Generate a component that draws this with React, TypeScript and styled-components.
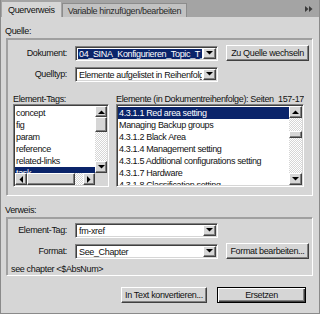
import styled, { createGlobalStyle, css } from "styled-components";

/* -------- Global -------- */
const GlobalStyle = createGlobalStyle`
  html, body {
    margin: 0;
    padding: 0;
    background: #d6d6d6;
  }
  body {
    font-family: "Liberation Sans Narrow", "Arial Narrow", "Liberation Sans", Arial, sans-serif;
    font-size: 9px;
    letter-spacing: -0.35px;
    color: #111;
  }
`;

const raised = css`
  border: 1px solid;
  border-color: #ffffff #404040 #404040 #ffffff;
  box-shadow: inset -1px -1px #808080;
  background: #d6d6d6;
`;

const sunken = css`
  border: 1px solid;
  border-color: #808080 #ffffff #ffffff #808080;
  box-shadow: inset 1px 1px #404040, inset -1px -1px #d6d6d6;
`;

const checker = css`
  background: repeating-conic-gradient(#ffffff 0 25%, #d6d6d6 0 50%) 0 0 / 2px 2px;
`;

/* -------- Styled Components -------- */
const Panel = styled.div`
  width: 320px;
  height: 314px;
  box-sizing: border-box;
  background: #d6d6d6;
  border-left: 1px solid #8a8a8a;
  border-right: 1px solid #8a8a8a;
  border-bottom: 1px solid #8a8a8a;
  display: flex;
  flex-direction: column;
  overflow: hidden;
`;

const TabBar = styled.div`
  height: 17px;
  flex: none;
  background: #a4a4a4;
  display: flex;
  align-items: flex-end;
  padding-left: 1px;
`;

const Tab = styled.div<{ $active?: boolean }>`
  box-sizing: border-box;
  height: ${(p) => (p.$active ? "15px" : "14px")};
  padding: 0 5px;
  display: flex;
  align-items: center;
  margin-right: 1px;
  background: ${(p) => (p.$active ? "#d6d6d6" : "#c2c2c2")};
  color: ${(p) => (p.$active ? "#111" : "#2a2a2a")};
  border: 1px solid ${(p) => (p.$active ? "#d6d6d6" : "#8c8c8c")};
  border-bottom: none;
  white-space: nowrap;
`;

const TabSpacer = styled.div`
  flex: 1;
`;

const MenuIcon = styled.div`
  align-self: center;
  width: 14px;
  display: flex;
  align-items: center;
`;

const Body = styled.div`
  flex: 1;
  display: flex;
  flex-direction: column;
  padding: 9px 6px 0 4px;
`;

const SectionLabel = styled.div<{ $mt?: number }>`
  height: 11px;
  line-height: 11px;
  margin-top: ${(p) => p.$mt ?? 0}px;
  margin-bottom: 1px;
`;

const Group = styled.div<{ $pad: string }>`
  margin-left: 1px;
  border: 1px solid;
  border-color: #a0a0a0 #ffffff #ffffff #a0a0a0;
  box-shadow: 1px 1px 0 #a0a0a0 inset;
  padding: ${(p) => p.$pad};
  display: flex;
  flex-direction: column;
`;

const FormRow = styled.div<{ $mt?: number }>`
  display: grid;
  grid-template-columns: 60px 143px auto;
  column-gap: 8px;
  align-items: center;
  height: 16px;
  margin-top: ${(p) => p.$mt ?? 0}px;
`;

const FieldLabel = styled.div`
  text-align: right;
  white-space: nowrap;
`;

const Select = styled.div`
  ${sunken};
  box-sizing: border-box;
  height: 15px;
  background: #fff;
  display: flex;
  align-items: stretch;
  padding: 1px;
`;

const SelectValue = styled.div<{ $selected?: boolean }>`
  flex: 1;
  overflow: hidden;
  white-space: nowrap;
  line-height: 11px;
  padding-left: 1px;
  margin: 1px 1px 0 1px;
  background: ${(p) => (p.$selected ? "#0a246a" : "transparent")};
  color: ${(p) => (p.$selected ? "#fff" : "#111")};
`;

const ArrowButton = styled.div`
  ${raised};
  box-sizing: border-box;
  width: 13px;
  display: flex;
  align-items: center;
  justify-content: center;
`;

const PushButton = styled.div<{ $width: number; $default?: boolean }>`
  ${raised};
  box-sizing: border-box;
  width: ${(p) => p.$width}px;
  height: 16px;
  display: flex;
  align-items: center;
  justify-content: center;
  white-space: nowrap;
  ${(p) =>
    p.$default &&
    css`
      border-color: #000;
      box-shadow: inset 1px 1px #ffffff, inset -1px -1px #404040,
        inset -2px -2px #808080;
    `}
`;

const ListsArea = styled.div`
  display: grid;
  grid-template-columns: 96px 188px;
  column-gap: 7px;
  margin-top: 12px;
  padding-left: 6px;
`;

const ListHeader = styled.div`
  height: 10px;
  line-height: 10px;
  white-space: nowrap;
  overflow: hidden;
`;

const ListBox = styled.div<{ $hscroll?: boolean; $sbw: number }>`
  ${sunken};
  box-sizing: border-box;
  height: 83px;
  background: #fff;
  padding: 1px;
  display: grid;
  grid-template-columns: 1fr ${(p) => p.$sbw}px;
  grid-template-rows: ${(p) => (p.$hscroll ? "1fr 12px" : "1fr")};
  overflow: hidden;
`;

const ListItems = styled.div`
  overflow: hidden;
  padding-top: 1px;
`;

const ListItem = styled.div<{ $selected?: boolean }>`
  height: 12px;
  line-height: 12px;
  white-space: nowrap;
  padding-left: 1px;
  background: ${(p) => (p.$selected ? "#0a246a" : "transparent")};
  color: ${(p) => (p.$selected ? "#fff" : "#111")};
`;

const VScroll = styled.div`
  display: flex;
  flex-direction: column;
  ${checker};
`;

const HScroll = styled.div`
  display: flex;
  ${checker};
`;

const ScrollBtn = styled.div<{ $size?: number }>`
  ${raised};
  box-sizing: border-box;
  flex: none;
  width: 100%;
  height: ${(p) => p.$size ?? 12}px;
  display: flex;
  align-items: center;
  justify-content: center;
`;

const HScrollBtn = styled(ScrollBtn)`
  width: 12px;
  height: 100%;
`;

const Thumb = styled.div<{ $size: number; $offset?: number }>`
  ${raised};
  box-sizing: border-box;
  flex: none;
  height: ${(p) => p.$size}px;
  margin-top: ${(p) => p.$offset ?? 0}px;
`;

const HThumb = styled.div<{ $size: number }>`
  ${raised};
  box-sizing: border-box;
  flex: none;
  width: ${(p) => p.$size}px;
`;

const Track = styled.div`
  flex: 1;
`;

const Corner = styled.div`
  background: #d6d6d6;
`;

const InfoText = styled.div`
  margin-top: 5px;
  height: 11px;
  line-height: 11px;
  padding-left: 4px;
`;

const ButtonRow = styled.div`
  display: flex;
  justify-content: flex-end;
  gap: 10px;
  margin-top: 11px;
  padding-right: 7px;
`;

/* -------- Icons -------- */
type Dir = "up" | "down" | "left" | "right";

function Arrow({ dir }: { dir: Dir }) {
  const pts: Record<Dir, string> = {
    up: "0,4 7,4 3.5,0.5",
    down: "0,0 7,0 3.5,3.5",
    left: "4,0 4,7 0.5,3.5",
    right: "0,0 0,7 3.5,3.5",
  };
  const vertical = dir === "up" || dir === "down";
  return (
    <svg width={vertical ? 7 : 4} height={vertical ? 4 : 7}>
      <polygon points={pts[dir]} fill="#000" />
    </svg>
  );
}

function DropDown({ value, selected }: { value: string; selected?: boolean }) {
  return (
    <Select>
      <SelectValue $selected={selected}>{value}</SelectValue>
      <ArrowButton>
        <Arrow dir="down" />
      </ArrowButton>
    </Select>
  );
}

const tags = ["concept", "fig", "param", "reference", "related-links", "task"];
const elements = [
  "4.3.1.1 Red area setting",
  "Managing Backup groups",
  "4.3.1.2 Black Area",
  "4.3.1.4 Management setting",
  "4.3.1.5 Additional configurations setting",
  "4.3.1.7 Hardware",
  "4.3.1.8 Classification setting",
];

export default function App() {
  return (
    <>
      <GlobalStyle />
      <Panel>
        <TabBar>
          <Tab $active>Querverweis</Tab>
          <Tab>Variable hinzufügen/bearbeiten</Tab>
          <TabSpacer />
          <MenuIcon>
            <svg width="8" height="6" viewBox="0 0 8 6">
              <polygon points="0,0 0,6 3.5,3" fill="#3a3a3a" />
              <polygon points="4,0 4,6 7.5,3" fill="#3a3a3a" />
            </svg>
          </MenuIcon>
        </TabBar>
        <Body>
          <SectionLabel>Quelle:</SectionLabel>
          <Group $pad="6px 8px 8px 0">
            <FormRow>
              <FieldLabel>Dokument:</FieldLabel>
              <DropDown value="04_SINA_Konfigurieren_Topic_T_SINA" selected />
              <PushButton $width={83}>Zu Quelle wechseln</PushButton>
            </FormRow>
            <FormRow $mt={5}>
              <FieldLabel>Quelltyp:</FieldLabel>
              <DropDown value="Elemente aufgelistet in Reihenfolge" />
              <span />
            </FormRow>
            <ListsArea>
              <div>
                <ListHeader>Element-Tags:</ListHeader>
                <ListBox $hscroll $sbw={12}>
                  <ListItems>
                    {tags.map((t) => (
                      <ListItem key={t} $selected={t === "task"}>
                        {t}
                      </ListItem>
                    ))}
                  </ListItems>
                  <VScroll>
                    <ScrollBtn $size={11}>
                      <Arrow dir="up" />
                    </ScrollBtn>
                    <Thumb $size={15} />
                    <Track />
                    <ScrollBtn>
                      <Arrow dir="down" />
                    </ScrollBtn>
                  </VScroll>
                  <HScroll>
                    <HScrollBtn>
                      <Arrow dir="left" />
                    </HScrollBtn>
                    <HThumb $size={48} />
                    <Track />
                    <HScrollBtn>
                      <Arrow dir="right" />
                    </HScrollBtn>
                  </HScroll>
                  <Corner />
                </ListBox>
              </div>
              <div>
                <ListHeader>
                  Elemente (in Dokumentreihenfolge): Seiten&nbsp;&nbsp;157-176
                </ListHeader>
                <ListBox $sbw={13}>
                  <ListItems>
                    {elements.map((e, i) => (
                      <ListItem key={e} $selected={i === 0}>
                        {e}
                      </ListItem>
                    ))}
                  </ListItems>
                  <VScroll>
                    <ScrollBtn>
                      <Arrow dir="up" />
                    </ScrollBtn>
                    <Thumb $size={7} $offset={13} />
                    <Track />
                    <ScrollBtn>
                      <Arrow dir="down" />
                    </ScrollBtn>
                  </VScroll>
                </ListBox>
              </div>
            </ListsArea>
          </Group>
          <SectionLabel $mt={9}>Verweis:</SectionLabel>
          <Group $pad="4px 8px 0 0">
            <FormRow>
              <FieldLabel>Element-Tag:</FieldLabel>
              <DropDown value="fm-xref" />
              <span />
            </FormRow>
            <FormRow $mt={5}>
              <FieldLabel>Format:</FieldLabel>
              <DropDown value="See_Chapter" />
              <PushButton $width={83}>Format bearbeiten...</PushButton>
            </FormRow>
            <InfoText>see chapter &lt;$AbsNum&gt;</InfoText>
          </Group>
          <ButtonRow>
            <PushButton $width={86}>In Text konvertieren...</PushButton>
            <PushButton $width={89} $default>
              Ersetzen
            </PushButton>
          </ButtonRow>
        </Body>
      </Panel>
    </>
  );
}
